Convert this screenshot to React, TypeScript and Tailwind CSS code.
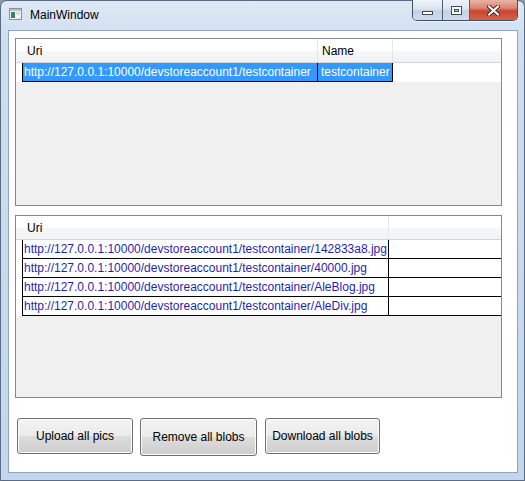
import React from "react";

const uris = [
  "http://127.0.0.1:10000/devstoreaccount1/testcontainer/142833a8.jpg",
  "http://127.0.0.1:10000/devstoreaccount1/testcontainer/40000.jpg",
  "http://127.0.0.1:10000/devstoreaccount1/testcontainer/AleBlog.jpg",
  "http://127.0.0.1:10000/devstoreaccount1/testcontainer/AleDiv.jpg",
];

function CaptionButtons() {
  return (
    <div className="-mt-px mr-[6px] flex h-[21px] overflow-hidden rounded-b-[5px] border border-t-0 border-[#3e506a] shadow-[0_1px_0_#eef4fb]">
      <div className="flex w-[30px] items-end justify-center border-r border-[#4e6078] bg-[linear-gradient(#eef3f9_0%,#dbe4ef_45%,#c3d1e2_55%,#cfdcec_100%)] pb-[5px]">
        <svg width="11" height="4" viewBox="0 0 11 4">
          <rect x="0.5" y="0.5" width="10" height="3" fill="#ffffff" stroke="#3c4a5c" />
        </svg>
      </div>
      <div className="flex w-[27px] items-start justify-center border-r border-[#4e6078] bg-[linear-gradient(#eef3f9_0%,#dbe4ef_45%,#c3d1e2_55%,#cfdcec_100%)] pt-[6px]">
        <svg width="11" height="9" viewBox="0 0 11 9">
          <rect x="0" y="0" width="11" height="9" fill="#3c4a5c" />
          <rect x="1" y="1" width="9" height="7" fill="#ffffff" />
          <rect x="3" y="3" width="5" height="3" fill="#3c4a5c" />
          <rect x="4" y="4" width="3" height="1" fill="#c9d5e4" />
        </svg>
      </div>
      <div className="flex w-[47px] items-start justify-center bg-[linear-gradient(#eab2a5_0%,#dd8572_40%,#c9452e_55%,#d4634a_100%)] pt-[5px]">
        <svg width="13" height="11" viewBox="0 0 13 11">
          <path d="M2 1.5 L11 9.5 M11 1.5 L2 9.5" stroke="#4a2a28" strokeWidth="4" strokeLinecap="square" />
          <path d="M2 1.5 L11 9.5 M11 1.5 L2 9.5" stroke="#ffffff" strokeWidth="2" strokeLinecap="square" />
        </svg>
      </div>
    </div>
  );
}

function AppIcon() {
  return (
    <svg width="13" height="12" viewBox="0 0 13 12" className="ml-[8px] mt-[7px]">
      <rect x="0.5" y="0.5" width="12" height="11" fill="#f4f5f6" stroke="#8a9098" />
      <rect x="1" y="1" width="11" height="2" fill="#b9c0c8" />
      <rect x="2" y="4" width="4" height="6" fill="#3f7d6c" />
      <rect x="7" y="4" width="4" height="2" fill="#d2d6da" />
      <rect x="7" y="7" width="4" height="3" fill="#ffffff" stroke="#c9cdd2" strokeWidth="0.5" />
    </svg>
  );
}

function Header({ children }: { children: React.ReactNode }) {
  return (
    <div className="flex h-[24px] shrink-0 border-b border-[#d5d5d5] bg-[linear-gradient(#ffffff_0%,#ffffff_50%,#f6f7f8_50%,#f1f2f4_100%)] pl-[6px]">
      {children}
    </div>
  );
}

function Button({ label, w, h, ml }: { label: string; w: string; h: string; ml: string }) {
  return (
    <div
      className={`${w} ${h} ${ml} flex items-center justify-center rounded-[3px] border border-[#707070] bg-[linear-gradient(#f3f3f3_0%,#ebebeb_50%,#dddddd_50%,#cdcdcd_100%)] text-[12px] text-black shadow-[inset_0_0_0_1px_#fbfbfb]`}
    >
      {label}
    </div>
  );
}

export default function App() {
  return (
    <div className="h-[481px] w-[525px] overflow-hidden bg-[#8d98a6] font-['Liberation_Sans',Arial,sans-serif]">
      <div className="flex h-full w-full flex-col rounded-t-[7px] border border-[#5a6c84] bg-[linear-gradient(#dfe9f5_0%,#cfdef0_8%,#c3d6ed_100%)]">
        {/* title bar */}
        <div className="flex h-[29px] shrink-0 items-start">
          <AppIcon />
          <div className="ml-[8px] mt-[6px] text-[12px] leading-[16px] text-black">MainWindow</div>
          <div className="flex-1" />
          <CaptionButtons />
        </div>

        {/* client area */}
        <div className="ml-[7px] flex h-[443px] w-[510px] flex-col border border-[#8ea4bf] bg-white pl-[6px] pt-[7px]">
          {/* list 1 */}
          <div className="flex h-[168px] w-[487px] flex-col border border-[#828790] bg-[#f0f0f0]">
            <Header>
              <div className="flex w-[296px] items-center border-r border-[#e3e6ea] pl-[5px] text-[12px]">Uri</div>
              <div className="flex w-[75px] items-center border-r border-[#e3e6ea] pl-[4px] text-[12px]">Name</div>
            </Header>
            <div className="flex h-[19px] shrink-0 bg-white pl-[6px] text-[12px] leading-[18px]">
              <div className="w-[296px] overflow-hidden whitespace-nowrap border-b border-l border-r border-black bg-[#3399ff] pl-[1px] text-white">
                http://127.0.0.1:10000/devstoreaccount1/testcontainer
              </div>
              <div className="w-[75px] overflow-hidden whitespace-nowrap border-b border-r border-black bg-[#3399ff] pl-[3px] text-white">
                testcontainer
              </div>
            </div>
          </div>

          {/* list 2 */}
          <div className="mt-[9px] flex h-[183px] w-[487px] flex-col border border-[#828790] bg-[#f0f0f0]">
            <Header>
              <div className="flex w-[367px] items-center border-r border-[#e3e6ea] pl-[5px] text-[12px]">Uri</div>
            </Header>
            {uris.map((u) => (
              <div key={u} className="flex h-[19px] shrink-0 bg-white pl-[6px] text-[12px] leading-[18px]">
                <div className="w-[367px] overflow-hidden whitespace-nowrap border-b border-l border-r border-black pl-[1px] text-[#1f1fb4]">
                  {u}
                </div>
                <div className="flex-1 border-b border-black" />
              </div>
            ))}
          </div>

          {/* buttons */}
          <div className="mt-[20px] flex items-start pl-[2px]">
            <Button label="Upload all pics" w="w-[116px]" h="h-[36px]" ml="ml-0" />
            <Button label="Remove all blobs" w="w-[117px]" h="h-[38px]" ml="ml-[7px]" />
            <Button label="Download all blobs" w="w-[115px]" h="h-[36px]" ml="ml-[8px]" />
          </div>
        </div>
      </div>
    </div>
  );
}
